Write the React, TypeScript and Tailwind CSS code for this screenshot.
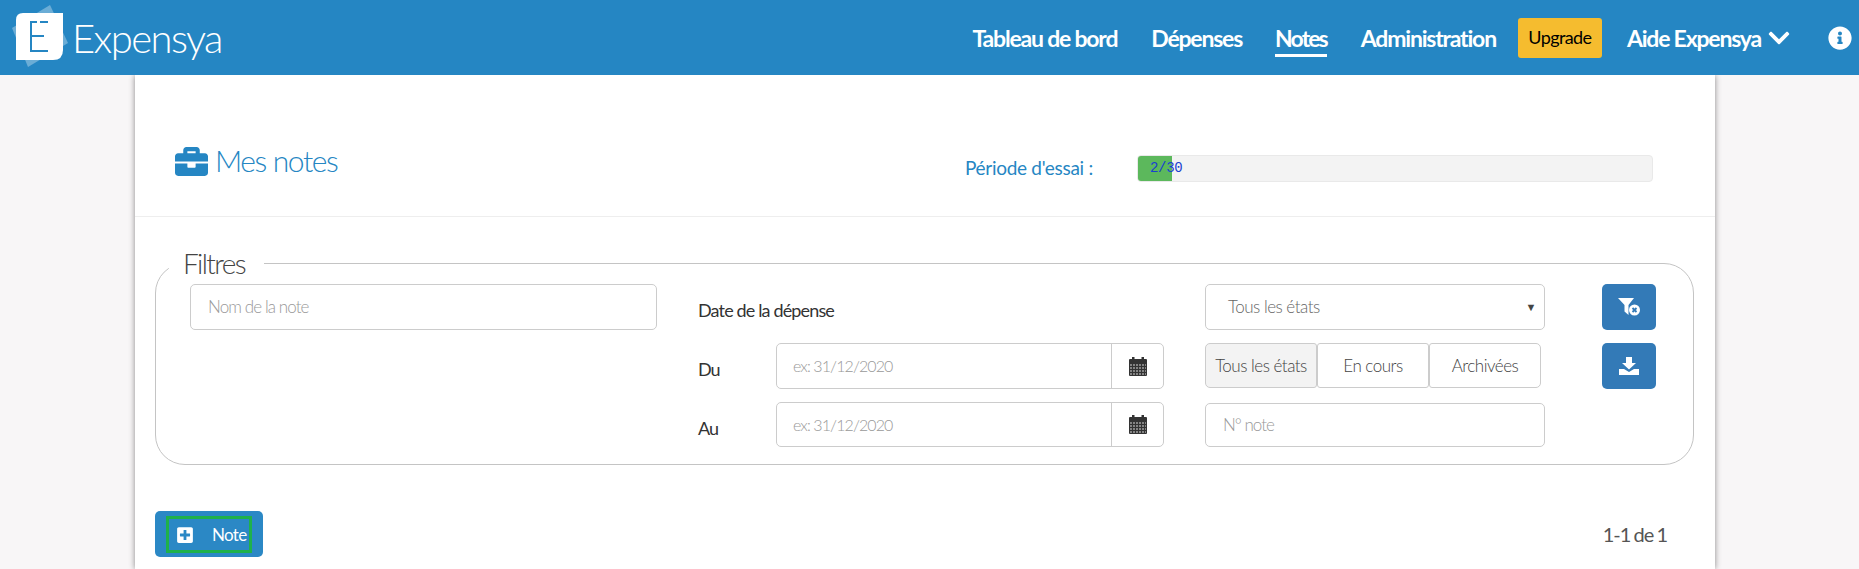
import React from "react";
import { FaBriefcase, FaChevronDown, FaInfoCircle, FaPlusSquare } from "react-icons/fa";

function Logo() {
  return (
    <svg width="70" height="75" viewBox="0 0 70 75" className="shrink-0">
      <path d="M12 28 L50 5 L68 43 L28 67 Z" fill="#ffffff" fillOpacity="0.32" />
      <path d="M16 20 Q16 13 23 13 H63 V50 Q63 60 53 60 H16 Z" fill="#ffffff" />
      <path d="M31 22 H37 M40 22 H48 M31 21 V51 H48 M31 36 H44" fill="none" stroke="#2586c3" strokeWidth="2" />
    </svg>
  );
}

function Calendar() {
  return (
    <svg width="18" height="19" viewBox="0 0 18 19" fill="#333333">
      <rect x="3" y="0" width="2.5" height="4" />
      <rect x="12.5" y="0" width="2.5" height="4" />
      <rect x="0" y="2" width="18" height="17" rx="1" />
      <path d="M1 8 H17 M1 11 H17 M1 14 H17 M1 17 H17" stroke="#ffffff" strokeWidth="0.8" strokeDasharray="2 1" />
    </svg>
  );
}

function FilterClear() {
  return (
    <svg width="24" height="20" viewBox="0 0 24 20">
      <path d="M1 1 H17 L11.5 8 V18 L7.5 14.5 V8 Z" fill="#ffffff" />
      <circle cx="17.5" cy="13" r="5.5" fill="#ffffff" />
      <path d="M15.5 11 L19.5 15 M19.5 11 L15.5 15" stroke="#337ab7" strokeWidth="1.8" />
    </svg>
  );
}

function DownloadTray() {
  return (
    <svg width="20" height="18" viewBox="0 0 20 18" fill="#ffffff">
      <path d="M7 0 H13 V6 H17 L10 12.5 L3 6 H7 Z" />
      <path d="M0 12 H5 L10 15 L15 12 H20 V18 H0 Z" />
    </svg>
  );
}

function NavLink({ children, active }: { children: React.ReactNode; active?: boolean }) {
  return (
    <a className={active ? "mt-[4px] border-b-[3px] border-white pb-[1px] text-[23px] font-bold leading-[30px] tracking-[-1.9px] text-white" : "text-[23px] font-bold leading-[30px] tracking-[-1.2px] text-white"}>
      {children}
    </a>
  );
}

function DateRow({ label, className }: { label: string; className: string }) {
  return (
    <div className={"flex " + className}>
      <span className="w-[78px] pt-[15px] text-[18px] leading-[22px] tracking-[-1px] text-[#333333]">{label}</span>
      <div className="flex flex-1 rounded-[5px] border border-[#cccccc] bg-white">
        <span className="flex flex-1 items-center pl-[16px] text-[16px] font-light tracking-[-0.9px] text-[#999999]">ex: 31/12/2020</span>
        <span className="flex w-[52px] items-center justify-center border-l border-[#cccccc]">
          <Calendar />
        </span>
      </div>
    </div>
  );
}

export default function App() {
  return (
    <div className="flex h-[569px] flex-col overflow-hidden bg-[#f8f6f7] font-['Lato',sans-serif]">
      <header className="relative z-10 flex h-[75px] shrink-0 items-center bg-[#2586c3]">
        <Logo />
        <span className="ml-[2px] text-[40px] font-light leading-none tracking-[-1.6px] text-white">Expensya</span>
        <nav className="ml-auto flex items-center">
          <NavLink>Tableau de bord</NavLink>
          <span className="w-[34px]" />
          <NavLink>Dépenses</NavLink>
          <span className="w-[33px]" />
          <NavLink active>Notes</NavLink>
          <span className="w-[34px]" />
          <NavLink>Administration</NavLink>
          <span className="ml-[22px] flex h-[40px] w-[84px] items-center justify-center rounded-[3px] bg-[#f5bc2f] text-[18px] tracking-[-0.6px] text-black">Upgrade</span>
          <span className="ml-[25px] text-[23px] font-bold leading-[30px] tracking-[-1.2px] text-white">Aide Expensya</span>
          <FaChevronDown className="ml-[6px] text-[24px] text-white" />
          <FaInfoCircle className="ml-[37px] mr-[7px] text-[24px] text-white" />
        </nav>
      </header>

      <main className="ml-[135px] w-[1580px] flex-1 bg-white pl-[20px] pr-[21px] shadow-[0_0_6px_rgba(0,0,0,0.45)]">
        <div className="-ml-[20px] -mr-[21px] flex h-[142px] items-center border-b border-[#eeeeee] pl-[40px] pt-[32px]">
          <div className="flex w-[790px] items-center">
            <FaBriefcase className="text-[33px] text-[#2586c3]" />
            <h1 className="mb-[3px] ml-[7px] text-[30px] font-light leading-none tracking-[-1.4px] text-[#2586c3]">Mes notes</h1>
          </div>
          <span className="mt-[14px] w-[172px] text-[19px] tracking-[-0.3px] text-[#2586c3]">Période d'essai :</span>
          <div className="mt-[14px] flex h-[27px] w-[516px] overflow-hidden rounded-[4px] border border-[#e9e9e9] bg-[#f3f3f3]">
            <div className="w-[34px] bg-[#5cb85c]" />
            <span className="-ml-[22px] self-center font-['Liberation_Mono',monospace] text-[14px] tracking-[-0.3px] text-[#1a3fd0]">2/30</span>
          </div>
        </div>

        <fieldset className="mt-[28px] rounded-[30px] border border-[#c4c4c4]">
          <legend className="ml-[13px] h-[36px] w-[95px] pl-[14px] text-[28px] font-light leading-[36px] tracking-[-1.6px] text-[#444444]">Filtres</legend>
          <div className="flex pb-[17px] pl-[34px] pt-[3px]">
            <div className="flex h-[46px] w-[467px] items-center rounded-[5px] border border-[#cccccc] pl-[17px] text-[17px] font-light tracking-[-0.9px] text-[#999999]">Nom de la note</div>

            <div className="ml-[41px] flex w-[466px] flex-col">
              <div className="h-[59px] pt-[15px] text-[18px] leading-[22px] tracking-[-0.85px] text-[#333333]">Date de la dépense</div>
              <DateRow label="Du" className="h-[46px]" />
              <DateRow label="Au" className="mt-[13px] h-[45px]" />
            </div>

            <div className="ml-[41px] flex w-[340px] flex-col">
              <div className="flex h-[46px] items-center justify-between rounded-[5px] border border-[#cccccc] pl-[22px] pr-[8px] text-[17px] font-light tracking-[-0.5px] text-[#666666]">
                <span>Tous les états</span>
                <span className="text-[11px] text-[#444444]">▼</span>
              </div>
              <div className="mt-[13px] flex h-[45px] w-[336px] whitespace-nowrap text-[17px] font-light tracking-[-0.5px] text-[#444444]">
                <span className="flex flex-1 items-center justify-center rounded-l-[5px] rounded-r-[3px] border border-[#cccccc] bg-[#f3f3f3]">Tous les états</span>
                <span className="flex flex-1 items-center justify-center rounded-[3px] border border-[#cccccc]">En cours</span>
                <span className="flex flex-1 items-center justify-center rounded-l-[3px] rounded-r-[5px] border border-[#cccccc]">Archivées</span>
              </div>
              <div className="mt-[15px] flex h-[44px] items-center rounded-[5px] border border-[#cccccc] pl-[17px] text-[17px] font-light tracking-[-1px] text-[#999999]">N° note</div>
            </div>

            <div className="ml-[57px] flex flex-col gap-[13px]">
              <button className="flex h-[46px] w-[54px] items-center justify-center rounded-[5px] bg-[#337ab7]"><FilterClear /></button>
              <button className="flex h-[46px] w-[54px] items-center justify-center rounded-[5px] bg-[#337ab7]"><DownloadTray /></button>
            </div>
          </div>
        </fieldset>

        <div className="mt-[46px] flex items-center justify-between pr-[27px]">
          <button className="h-[46px] w-[108px] rounded-[5px] bg-[#2b88c5] p-[5px_11px_4px]">
            <span className="flex h-full items-center border-[3px] border-[#1fb14b] pl-[7px] text-[17px] tracking-[-0.7px] text-white">
              <FaPlusSquare className="text-[18px]" />
              <span className="ml-[18px]">Note</span>
            </span>
          </button>
          <span className="text-[20px] tracking-[-1px] text-[#555555] [word-spacing:-1px]">1-1 de 1</span>
        </div>
      </main>
    </div>
  );
}
